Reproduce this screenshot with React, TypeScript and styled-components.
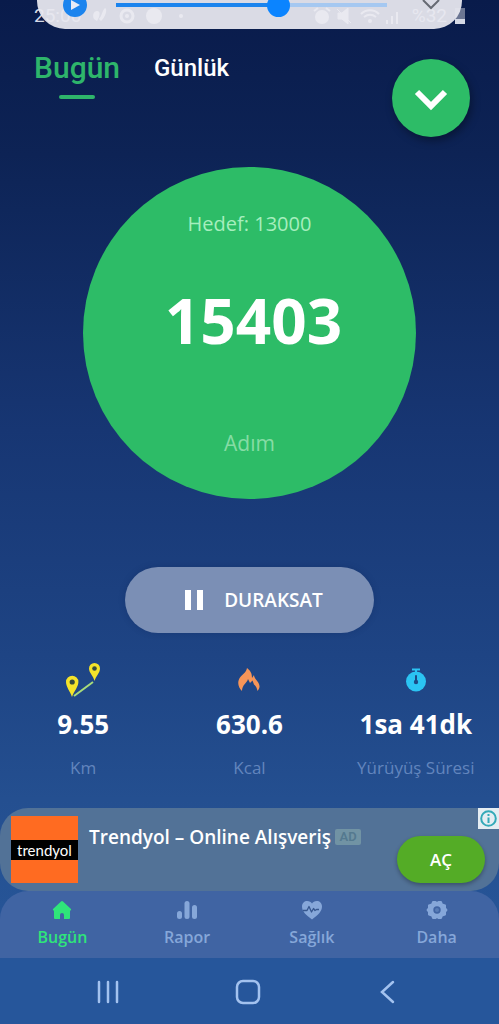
import React from 'react';
import styled, { createGlobalStyle, css } from 'styled-components';

const GlobalStyle = createGlobalStyle`
  *, *::before, *::after { box-sizing: border-box; }
  body { margin: 0; background: #27579a; }
  button { font: inherit; color: inherit; border: 0; padding: 0; background: none; cursor: pointer; }
  a { color: inherit; text-decoration: none; }
  svg { display: block; flex: none; }
`;

const Screen = styled.div`
  position: relative;
  display: flex;
  flex-direction: column;
  min-height: 100vh;
  overflow: hidden;
  font-family: 'Open Sans', 'Noto Sans', sans-serif;
  color: #fff;
  background: linear-gradient(180deg, #091b4b 0%, #0d2355 15%, #173673 42%, #1e4484 64%, #244f90 78%, #27579a 95%);
`;

const StatusBar = styled.div`
  display: flex;
  justify-content: space-between;
  align-items: center;
  height: 32px;
  padding: 0 34px;
  font-family: Roboto, sans-serif;
  font-size: 19px;
  line-height: 24px;
  color: #d5d9e6;
`;

const StatusGroup = styled.div`
  display: flex;
  align-items: center;
  gap: 8px;
`;

const MediaPill = styled.div`
  position: absolute;
  top: -21px;
  left: 37px;
  right: 37px;
  height: 50px;
  padding: 14px 21px 0 26px;
  display: flex;
  align-items: flex-start;
  border-radius: 0 0 28px 28px;
  background: rgba(232, 232, 239, 0.94);
`;

const PlayButton = styled.button`
  display: flex;
  align-items: center;
  justify-content: center;
  width: 24px;
  height: 24px;
  border-radius: 50%;
  background: #1b84ee;
`;

const Seek = styled.input`
  appearance: none;
  flex: 1;
  min-width: 0;
  height: 24px;
  margin: 0 34px 0 29px;
  background: linear-gradient(90deg, #1b84ee 60%, #a5c8f1 60%) center / 100% 4px no-repeat;
  &::-webkit-slider-thumb {
    appearance: none;
    width: 23px;
    height: 23px;
    border-radius: 50%;
    background: #0b84ff;
  }
`;

const Header = styled.header`
  display: flex;
  justify-content: space-between;
  align-items: flex-start;
  padding: 14px 29px 0 34px;
  font-family: Roboto, sans-serif;
`;

const Tabs = styled.nav`
  display: flex;
  gap: 34px;
`;

const Tab = styled.button<{ $active?: boolean }>`
  display: flex;
  flex-direction: column;
  align-items: center;
  gap: 5px;
  font-weight: 500;
  font-size: ${(p) => (p.$active ? 30 : 24)}px;
  line-height: 44px;
  color: ${(p) => (p.$active ? '#2eb56b' : '#fff')};
  ${(p) =>
    p.$active &&
    css`
      &::after {
        content: '';
        width: 36px;
        height: 4px;
        border-radius: 2px;
        background: #2eb56b;
      }
    `}
`;

const RoundButton = styled.button`
  display: flex;
  align-items: center;
  justify-content: center;
  width: 78px;
  height: 78px;
  margin-top: 13px;
  border-radius: 50%;
  background: #2dbc67;
  box-shadow: 2px 4px 8px rgba(0, 0, 0, 0.35);
`;

const Main = styled.main`
  display: flex;
  flex-direction: column;
  align-items: center;
  padding-top: 30px;
`;

const Goal = styled.section`
  display: flex;
  flex-direction: column;
  align-items: center;
  justify-content: space-between;
  width: 66.6%;
  aspect-ratio: 1;
  padding: 41px 0 40px;
  border-radius: 50%;
  background: #2dbc67;
`;

const GoalText = styled.span`
  font-size: 20px;
  line-height: 32px;
  color: #a6eebe;
`;

const UnitText = styled(GoalText)`
  font-size: 21px;
  color: #86dca5;
`;

const Steps = styled.strong`
  padding: 0 0 28px 8px;
  font-family: 'Noto Sans', sans-serif;
  font-weight: 700;
  font-size: 62px;
  line-height: 80px;
`;

const PauseButton = styled.button`
  display: flex;
  align-items: center;
  justify-content: center;
  gap: 20px;
  width: 50%;
  height: 66px;
  margin-top: 68px;
  padding-left: 8px;
  border-radius: 33px;
  background: #7b8fb5;
  font-weight: 600;
  font-size: 19px;
  box-shadow: 0 0 6px rgba(10, 30, 80, 0.25);
`;

const Stats = styled.dl`
  display: grid;
  grid-template-columns: repeat(3, 1fr);
  width: 100%;
  margin: 27px 0 24px;
`;

const Stat = styled.div`
  display: grid;
  justify-items: center;
  grid-template-rows: 40px 48px 36px;
  align-items: center;
  white-space: nowrap;
`;

const StatIcon = styled.dd`
  grid-row: 1;
  margin: 0;
`;

const StatLabel = styled.dt`
  grid-row: 3;
  padding-top: 4px;
  font-size: 17px;
  line-height: 24px;
  color: #6285bd;
`;

const StatValue = styled.dd`
  grid-row: 2;
  margin: 0;
  font-weight: 700;
  font-size: 26px;
  line-height: 40px;
`;

const Ad = styled.aside`
  position: relative;
  display: flex;
  align-items: flex-start;
  height: 83px;
  padding: 8px 14px 0 11px;
  border-radius: 28px 0 28px 28px;
  background: #527297;
`;

const AdLogo = styled.div`
  display: flex;
  align-items: center;
  flex: none;
  width: 67px;
  height: 67px;
  background: #ff6b21;
`;

const AdLogoText = styled.span`
  width: 100%;
  background: #000;
  text-align: center;
  font-family: Lato, sans-serif;
  font-size: 15px;
  line-height: 20px;
`;

const AdTitle = styled.a`
  flex: 1;
  display: flex;
  align-items: center;
  gap: 4px;
  padding: 6px 0 0 11px;
  font-weight: 600;
  font-size: 19px;
  line-height: 30px;
  white-space: nowrap;
`;

const AdBadge = styled.span`
  width: 26px;
  border-radius: 2px;
  background: #7193a4;
  color: #54798f;
  text-align: center;
  font-family: Roboto, sans-serif;
  font-size: 13px;
  line-height: 16px;
`;

const OpenButton = styled.button`
  flex: none;
  width: 88px;
  height: 47px;
  margin-top: 20px;
  border-radius: 24px;
  background: #54ac26;
  font-weight: 600;
  font-size: 17px;
  box-shadow: 0 2px 4px rgba(0, 0, 0, 0.3);
`;

const AdInfo = styled.button`
  position: absolute;
  top: 0;
  right: 0;
  display: flex;
  align-items: center;
  justify-content: center;
  width: 21px;
  height: 21px;
  background: #e5edf2;
`;

const BottomNav = styled.nav`
  display: grid;
  grid-template-columns: repeat(4, 1fr);
  height: 67px;
  border-radius: 28px 28px 0 0;
  background: #4064a3;
`;

const NavItem = styled.a<{ $active?: boolean }>`
  display: flex;
  flex-direction: column;
  align-items: center;
  gap: 5px;
  padding-top: 9px;
  font-weight: 600;
  font-size: 16px;
  line-height: 24px;
  color: ${(p) => (p.$active ? '#2fe57a' : '#86a7d9')};
`;

const SystemBar = styled.footer`
  display: flex;
  justify-content: center;
  gap: 112px;
  height: 66px;
  padding: 1px 4px 0 0;
  color: #a3c2ef;
  background: #26569b;
`;

const SystemButton = styled.button`
  display: flex;
  align-items: center;
  justify-content: center;
  width: 28px;
`;

const RouteIcon = () => (
  <svg width="36" height="36" viewBox="0 0 36 36">
    <path d="M9 34 28 20" stroke="#a9dc7a" strokeWidth="2" />
    <path fill="#f4e32a" d="M7 35C5 29 1 25 1 20a6.200 6.200 0 0 1 12.400 0c0 5-4.400 9-6.400 15Z" />
    <path fill="#f4e32a" d="M29.500 19c-1-5-5.500-8-5.500-12.500a5.500 5.500 0 0 1 11 0c0 4.500-4 7.500-5.500 12.500Z" />
    <circle cx="7.200" cy="20" r="2.600" fill="#374b3e" />
    <circle cx="29.500" cy="6.500" r="2.300" fill="#374b3e" />
  </svg>
);

const FlameIcon = () => (
  <svg width="22" height="24" viewBox="0 0 22 24">
    <path fill="#f79558" d="M4 23C0 19-1 14 2 9.500 4 6.500 8 5 9 0c4 3 5 6 5 10l2-3c0 4 5 6 5.500 11 .2 2-1 3.500-2 5-.5-3-1.500-5-3.500-6.500l-1.500-4-2.500 2.500-2-4c-1 4-6 6-6 12Z" />
  </svg>
);

const TimerIcon = () => (
  <svg width="22" height="24" viewBox="0 0 22 24">
    <path d="M7 1.500h8M11 1v4" stroke="#2bc4f3" strokeWidth="2" />
    <circle cx="11" cy="13.500" r="10" fill="#2bc4f3" />
    <path d="M11 8v6" stroke="#1d4a86" strokeWidth="2" strokeLinecap="round" />
    <circle cx="11" cy="14" r="2.200" fill="#1d4a86" />
  </svg>
);

const HomeIcon = () => (
  <svg width="20" height="20" viewBox="0 0 20 20" fill="currentColor">
    <path d="M9 1.500a1.500 1.500 0 0 1 2 0l7.700 7.200c.8.800.4 1.800-.5 1.800H18V18a1 1 0 0 1-1 1h-5v-4a2 2 0 0 0-4 0v4H3a1 1 0 0 1-1-1v-7.500h-.2c-.9 0-1.300-1-.5-1.800Z" />
  </svg>
);

const ReportIcon = () => (
  <svg width="22" height="20" viewBox="0 0 22 20" fill="currentColor">
    <rect x="1" y="11" width="5" height="8" rx="2.500" />
    <rect x="8.500" y="1" width="5" height="18" rx="2.500" />
    <rect x="16" y="5" width="5" height="14" rx="2.500" />
  </svg>
);

const HeartIcon = () => (
  <svg width="22" height="20" viewBox="0 0 22 20">
    <path fill="currentColor" d="M11 19.500C5 15 1 11.500 1 6.500 1 3 3.500 1 6.200 1 8.500 1 10 2 11 3.500 12 2 13.500 1 15.800 1 18.500 1 21 3 21 6.500c0 5-4 8.500-10 13Z" />
    <path d="M2 10.500h4l2-4 2.500 5.500 2-3.500 1.500 2 1.500-1H18" fill="none" stroke="#36578f" strokeWidth="1.300" strokeLinejoin="round" />
  </svg>
);

const GearIcon = () => (
  <svg width="22" height="20" viewBox="0 0 22 20">
    <path fill="currentColor" stroke="currentColor" strokeWidth="2" strokeLinejoin="round" d="M7 2h2.500L11 3l1.500-1H15l1 2.500 3 1V8l1.500 2L19 12v2.500l-3 1L15 18h-2.500L11 17l-1.500 1H7l-1-2.500-3-1V12l-1.500-2L3 8V5.500l3-1Z" />
    <circle cx="11" cy="10" r="3.700" fill="#4064a3" />
    <circle cx="11" cy="10" r="2" fill="#587db7" />
  </svg>
);

const navItems = [
  { label: 'Bugün', Icon: HomeIcon },
  { label: 'Rapor', Icon: ReportIcon },
  { label: 'Sağlık', Icon: HeartIcon },
  { label: 'Daha', Icon: GearIcon },
];

const stats = [
  { label: 'Km', value: '9.55', Icon: RouteIcon },
  { label: 'Kcal', value: '630.6', Icon: FlameIcon },
  { label: 'Yürüyüş Süresi', value: '1sa 41dk', Icon: TimerIcon },
];

export default function App() {
  return (
    <Screen>
      <GlobalStyle />
      <StatusBar>
        <StatusGroup>
          <span>25:00</span>
          <svg width="108" height="18" viewBox="0 0 108 18" fill="#fff">
            <path d="M8 4c3 0 3 3 2 6l-2 4-3-2c-2-4 0-8 3-8Zm8-3c3 1 0 10-4 13l-2-2c3-3 3-8 6-11Z" />
            <circle cx="38" cy="9" r="6" fill="none" stroke="#fff" strokeWidth="3" />
            <circle cx="38" cy="9" r="2" />
            <circle cx="65" cy="9" r="8" />
            <circle cx="92" cy="9" r="2" />
          </svg>
        </StatusGroup>
        <StatusGroup>
          <svg width="92" height="18" viewBox="0 0 92 18" fill="#fff">
            <circle cx="10" cy="10" r="7" />
            <path d="m2 4 4-3m8 0 4 3" stroke="#fff" strokeWidth="2" />
            <path d="M26 6h4l6-5v16l-6-5h-4ZM25 2l14 14" stroke="#fff" />
            <path d="M49 7c5-5 13-5 18 0m-15 3c4-3 8-3 12 0" stroke="#fff" strokeWidth="2" fill="none" />
            <circle cx="58" cy="14" r="2" />
            <path d="M74 13h2v4h-2Zm5-4h2v8h-2Zm5-4h2v12h-2Z" />
          </svg>
          <span>%32</span>
          <svg width="10" height="16" viewBox="0 0 10 16"><path fill="#fff" opacity=".4" d="M0 0h10v11H0Z" /><path fill="#d5d9e6" d="M0 11h10v5H0Z" /></svg>
        </StatusGroup>
      </StatusBar>
      <MediaPill>
        <PlayButton aria-label="Oynat">
          <svg width="12" height="12" viewBox="0 0 12 12"><path fill="#e6ebf7" d="m2 1 9 5-9 5Z" /></svg>
        </PlayButton>
        <Seek type="range" aria-label="Konum" defaultValue={61} />
        <svg width="20" height="24" viewBox="0 0 20 24" fill="none" stroke="#666a73" strokeWidth="2"><path d="m2 7 8 8 8-8" /></svg>
      </MediaPill>
      <Header>
        <Tabs>
          <Tab $active>Bugün</Tab>
          <Tab>Günlük</Tab>
        </Tabs>
        <RoundButton aria-label="Genişlet">
          <svg width="34" height="26" viewBox="0 0 34 26" fill="none" stroke="#fff" strokeWidth="6"><path d="m3 7 14 14L31 7" /></svg>
        </RoundButton>
      </Header>
      <Main>
        <Goal>
          <GoalText>Hedef: 13000</GoalText>
          <Steps>15403</Steps>
          <UnitText>Adım</UnitText>
        </Goal>
        <PauseButton>
          <svg width="20" height="20" viewBox="0 0 20 20" fill="#fff"><path d="M1 0h6v20H1ZM13 0h6v20h-6Z" /></svg>
          DURAKSAT
        </PauseButton>
        <Stats>
          {stats.map(({ label, value, Icon }) => (
            <Stat key={label}>
              <StatLabel>{label}</StatLabel>
              <StatValue>{value}</StatValue>
              <StatIcon><Icon /></StatIcon>
            </Stat>
          ))}
        </Stats>
      </Main>
      <Ad>
        <AdLogo><AdLogoText>trendyol</AdLogoText></AdLogo>
        <AdTitle href="#">Trendyol – Online Alışveriş <AdBadge>AD</AdBadge></AdTitle>
        <OpenButton>AÇ</OpenButton>
        <AdInfo aria-label="Reklam bilgisi">
          <svg width="17" height="17" viewBox="0 0 17 17" fill="none" stroke="#34a9b8" strokeWidth="2"><circle cx="8.500" cy="8.500" r="7.300" /><path d="M8.500 7.500V13M8.500 4v2" /></svg>
        </AdInfo>
      </Ad>
      <BottomNav>
        {navItems.map(({ label, Icon }, i) => (
          <NavItem key={label} href="#" $active={i === 0}><Icon />{label}</NavItem>
        ))}
      </BottomNav>
      <SystemBar>
        <SystemButton aria-label="Son uygulamalar">
          <svg width="24" height="24" viewBox="0 0 24 24" stroke="currentColor" strokeWidth="2.500" strokeLinecap="round"><path d="M3 2v20M12 2v20M21 2v20" /></svg>
        </SystemButton>
        <SystemButton aria-label="Ana ekran">
          <svg width="26" height="26" viewBox="0 0 26 26" fill="none" stroke="currentColor" strokeWidth="2.500"><rect x="2" y="2" width="22" height="22" rx="6" /></svg>
        </SystemButton>
        <SystemButton aria-label="Geri">
          <svg width="16" height="24" viewBox="0 0 16 24" fill="none" stroke="currentColor" strokeWidth="2.500" strokeLinecap="round"><path d="M13 2 2 12l11 10" /></svg>
        </SystemButton>
      </SystemBar>
    </Screen>
  );
}
